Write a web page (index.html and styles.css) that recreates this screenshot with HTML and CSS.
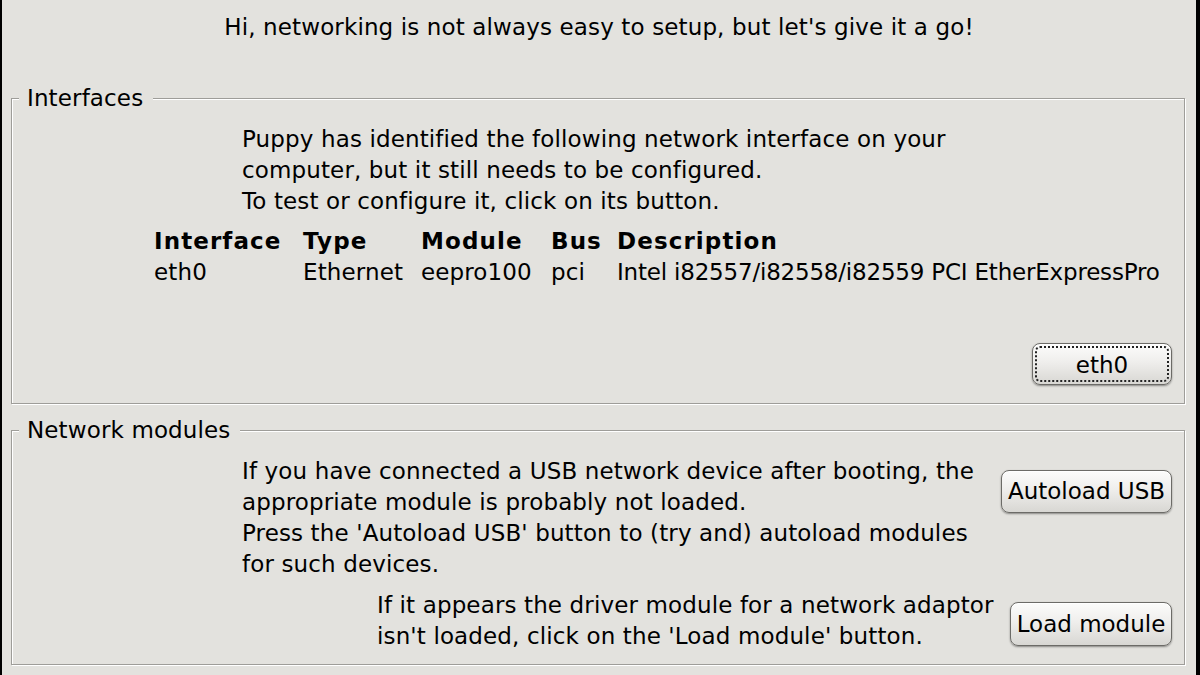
FILE: index.html
```html
<!DOCTYPE html>
<html>
<head>
<meta charset="utf-8">
<link rel="stylesheet" href="styles.css">
</head>
<body>
<div class="window">
  <div class="title">Hi, networking is not always easy to setup, but let's give it a go!</div>

  <fieldset class="frame frame-interfaces">
    <legend>Interfaces</legend>
    <p class="intro">Puppy has identified the following network interface on your<br>computer, but it still needs to be configured.<br>To test or configure it, click on its button.</p>
    <div class="iftable">
      <span class="th">Interface</span><span class="th">Type</span><span class="th">Module</span><span class="th">Bus</span><span class="th">Description</span>
      <span>eth0</span><span>Ethernet</span><span>eepro100</span><span>pci</span><span class="desc">Intel i82557/i82558/i82559 PCI EtherExpressPro</span>
    </div>
    <div class="btnrow">
      <button class="btn btn-eth focused"><span class="focus">eth0</span></button>
    </div>
  </fieldset>

  <fieldset class="frame frame-modules">
    <legend>Network modules</legend>
    <div class="modrow modrow-usb">
      <p class="modtext">If you have connected a USB network device after booting, the<br>appropriate module is probably not loaded.<br>Press the 'Autoload USB' button to (try and) autoload modules<br>for such devices.</p>
      <button class="btn btn-usb">Autoload USB</button>
    </div>
    <div class="modrow modrow-load">
      <p class="modtext">If it appears the driver module for a network adaptor<br>isn't loaded, click on the 'Load module' button.</p>
      <button class="btn btn-load">Load module</button>
    </div>
  </fieldset>
</div>
</body>
</html>
```

FILE: styles.css
```css
html, body {
  margin: 0;
  padding: 0;
  background: #e3e2de;
}

body {
  font-family: "DejaVu Sans", "Liberation Sans", sans-serif;
  font-size: 23px;
  line-height: 31px;
  letter-spacing: 0.13px;
  color: #000;
}

.window {
  box-sizing: border-box;
  width: 1200px;
  height: 675px;
  border-left: 2px solid #000;
  border-right: 4px solid #000;
  padding: 12px 11px 0 9px;
  overflow: hidden;
}

.title {
  text-align: center;
  padding-left: 2px;
}

.frame {
  margin: 0;
  border: 1px solid #9e9d99;
  box-shadow: inset 1px 1px 0 #fff, 1px 1px 0 #fff;
  padding: 0 12px 0 7px;
  min-width: 0;
}

.frame legend {
  padding: 0 10px 0 8px;
  line-height: 27px;
  background: #e3e2de;
}

.frame-interfaces {
  margin-top: 42px;
  padding-top: 12px;
  padding-bottom: 18px;
}

.frame-modules {
  margin-top: 13px;
  padding-top: 12px;
  padding-bottom: 12px;
}

.intro {
  margin: 0 0 0 223px;
}

.iftable {
  margin: 9px 0 0 135px;
  display: grid;
  grid-template-columns: 149px 118px 130px 66px auto;
}

.th {
  font-weight: bold;
  letter-spacing: 1.1px;
}

.desc {
  letter-spacing: -0.2px;
}

.btnrow {
  display: flex;
  justify-content: flex-end;
  margin-top: 55px;
}

.btn {
  font: inherit;
  letter-spacing: 0;
  line-height: 31px;
  color: #000;
  white-space: nowrap;
  text-align: center;
  box-sizing: border-box;
  border: 1px solid #6c6b67;
  border-radius: 8px;
  background: linear-gradient(#fcfcfb, #efeeec 45%, #d8d7d3);
  box-shadow: 0 1px 2px rgba(0, 0, 0, 0.4), inset 0 1px 0 #fff;
  padding: 0;
  margin: 0;
  cursor: default;
  flex: none;
}

.btn-eth {
  width: 140px;
  height: 42px;
  padding: 2px;
}

.btn-eth .focus {
  display: block;
  height: 100%;
  box-sizing: border-box;
  border: 2px dotted #222;
  border-radius: 5px;
  line-height: 34px;
}

.btn-usb {
  width: 171px;
  height: 43px;
  margin-top: 14px;
}

.btn-load {
  width: 162px;
  height: 44px;
  margin-top: 12px;
}

.modrow {
  display: flex;
  align-items: flex-start;
  justify-content: space-between;
}

.modtext {
  margin: 0;
}

.modrow-usb .modtext {
  margin-left: 223px;
}

.modrow-load {
  margin-top: 10px;
}

.modrow-load .modtext {
  margin-left: 358px;
}
```
